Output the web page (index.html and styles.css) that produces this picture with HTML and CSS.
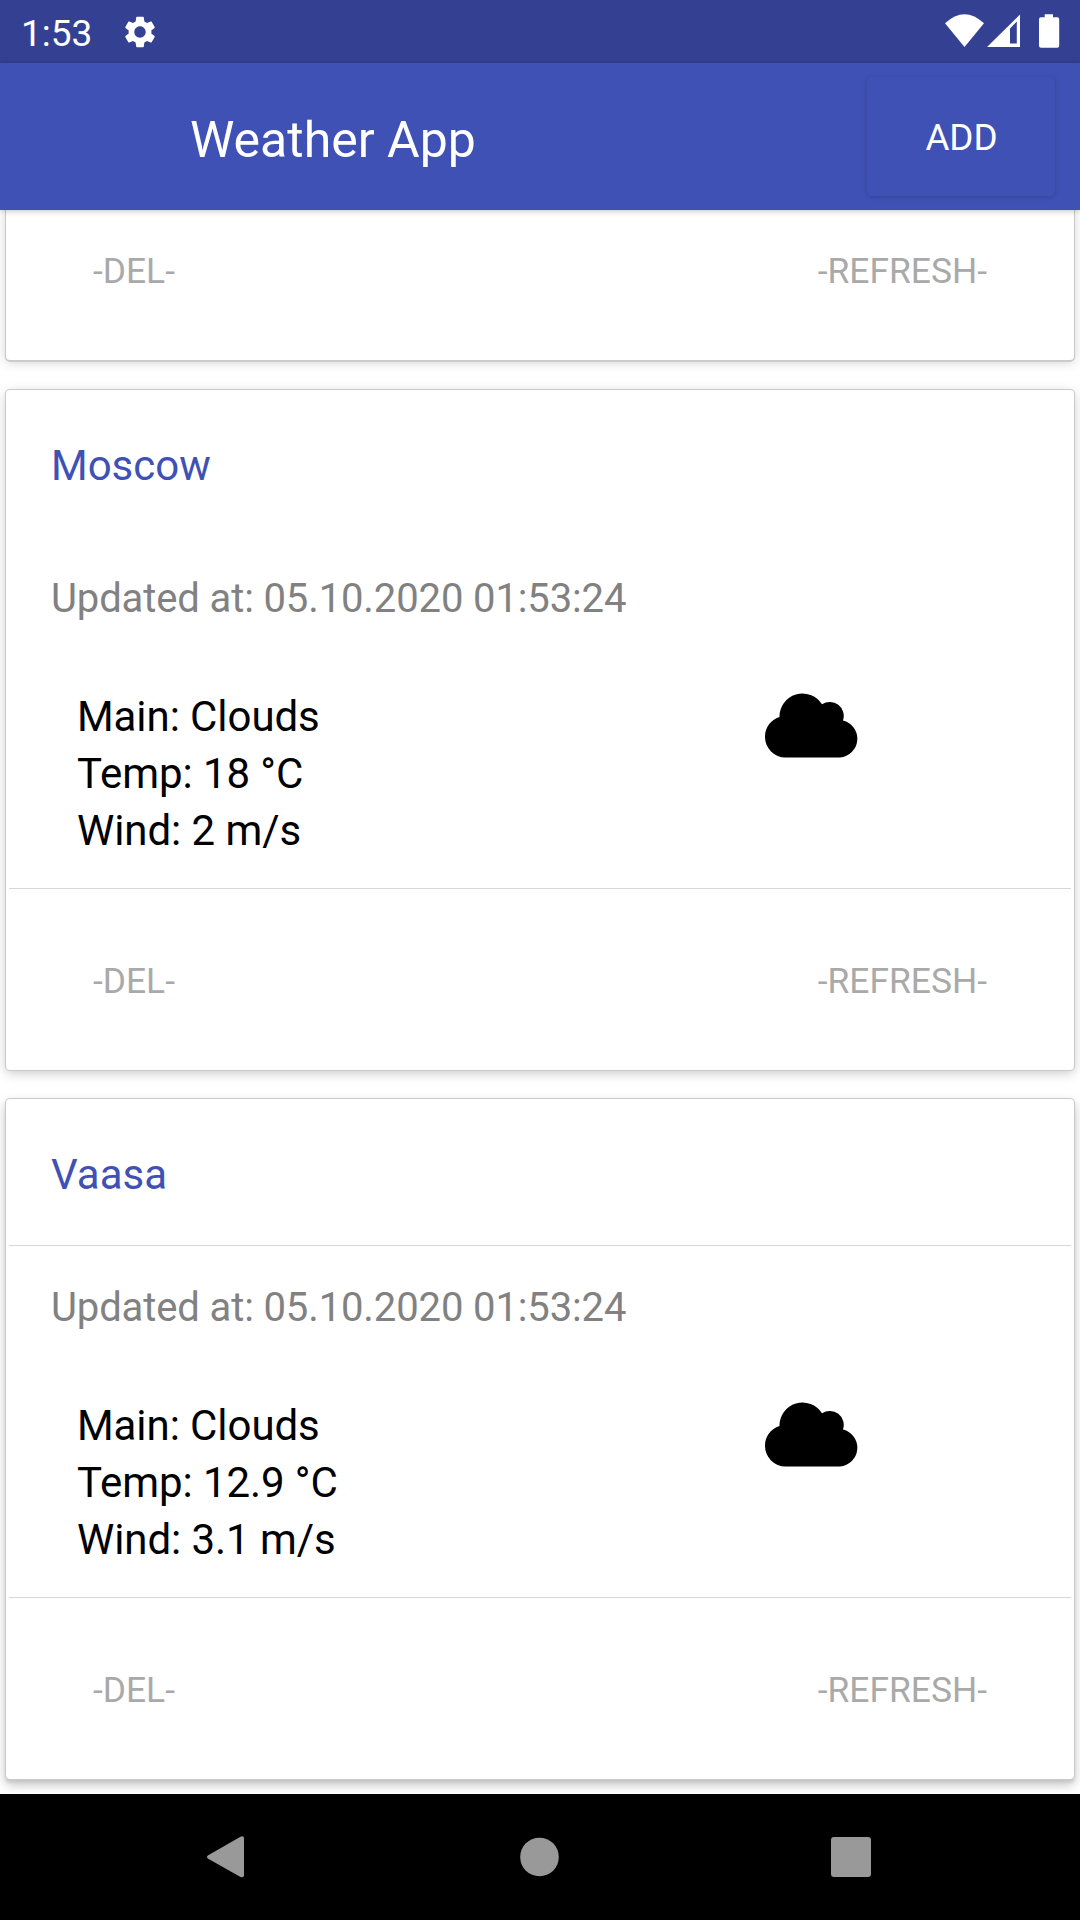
FILE: index.html
```html
<!DOCTYPE html>
<html lang="en">
<head>
<meta charset="utf-8">
<title>Weather App</title>
<link rel="stylesheet" href="styles.css">
</head>
<body>
<div class="statusbar">
  <span class="clock">1:53</span>
  <svg class="gear" width="38" height="38" viewBox="0 0 24 24"><path fill="#fff" d="M19.14 12.94c.04-.3.06-.61.06-.94 0-.32-.02-.64-.07-.94l2.03-1.58c.18-.14.23-.41.12-.61l-1.92-3.32c-.12-.22-.37-.29-.59-.22l-2.39.96c-.5-.38-1.03-.7-1.62-.94l-.36-2.54c-.04-.24-.24-.41-.48-.41h-3.84c-.24 0-.43.17-.47.41l-.36 2.54c-.59.24-1.13.57-1.62.94l-2.39-.96c-.22-.08-.47 0-.59.22L2.74 8.87c-.12.21-.08.47.12.61l2.03 1.58c-.05.3-.09.63-.09.94s.02.64.07.94l-2.03 1.58c-.18.14-.23.41-.12.61l1.92 3.32c.12.22.37.29.59.22l2.39-.96c.5.38 1.03.7 1.62.94l.36 2.54c.05.24.24.41.48.41h3.84c.24 0 .44-.17.47-.41l.36-2.54c.59-.24 1.13-.56 1.62-.94l2.39.96c.22.08.47 0 .59-.22l1.92-3.32c.12-.22.07-.47-.12-.61l-2.01-1.58zM12 15.6c-1.98 0-3.6-1.62-3.6-3.6s1.62-3.6 3.6-3.6 3.6 1.62 3.6 3.6-1.62 3.6-3.6 3.6z"/></svg>
  <svg class="signals" width="120" height="63" viewBox="0 0 120 63">
    <path fill="#fff" d="M5 23.200Q24.500 5.200 44 23.200L24.500 47Z"/>
    <path fill="#fff" fill-rule="evenodd" d="M47 47L80 14.500V47ZM70 28.500V43.500H76.800V21.500Z"/>
    <path fill="#fff" d="M104.700 14.300h8.300v3h4.200q2 0 2 2v26.500q0 2-2 2h-16.200q-2 0-2-2v-26.500q0-2 2-2h3.700z"/>
  </svg>
</div>
<header class="appbar">
  <h1 class="title">Weather App</h1>
  <button class="add">ADD</button>
</header>
<main class="list">
  <article class="card card-first">
    <div class="actions"><span>-DEL-</span><span>-REFRESH-</span></div>
  </article>
  <article class="card">
    <h2 class="city">Moscow</h2>
    <div class="body body-plain">
      <p class="updated">Updated at: 05.10.2020 01:53:24</p>
      <div class="weather">
        <div class="facts"><p>Main: Clouds</p><p>Temp: 18 °C</p><p>Wind: 2 m/s</p></div>
        <svg class="cloud" width="94" height="66" viewBox="0 0 94 66"><path d="M20.500 65.500A20.500 20.500 0 0 1 0 45A20.500 20.500 0 0 1 14.500 25A23 23 0 0 1 57 12.300A14 14 0 0 1 78 28.500A18.800 18.800 0 0 1 75 65.500Z"/></svg>
      </div>
    </div>
    <div class="actions"><span>-DEL-</span><span>-REFRESH-</span></div>
  </article>
  <article class="card card-last">
    <h2 class="city">Vaasa</h2>
    <div class="body">
      <p class="updated">Updated at: 05.10.2020 01:53:24</p>
      <div class="weather">
        <div class="facts"><p>Main: Clouds</p><p>Temp: 12.9 °C</p><p>Wind: 3.1 m/s</p></div>
        <svg class="cloud" width="94" height="66" viewBox="0 0 94 66"><path d="M20.500 65.500A20.500 20.500 0 0 1 0 45A20.500 20.500 0 0 1 14.500 25A23 23 0 0 1 57 12.300A14 14 0 0 1 78 28.500A18.800 18.800 0 0 1 75 65.500Z"/></svg>
      </div>
    </div>
    <div class="actions"><span>-DEL-</span><span>-REFRESH-</span></div>
  </article>
</main>
<nav class="navbar">
  <svg width="40" height="44" viewBox="0 0 40 44"><path fill="#999" d="M2.200 20.300L34.500 1.700Q37.800 .3 38 3.300V40.300Q37.800 43.300 34.500 41.900L2.200 23.800Q-.2 22 2.200 20.300Z"/></svg>
  <svg width="40" height="44" viewBox="0 0 40 44"><circle cx="20.500" cy="22" r="19.300" fill="#999"/></svg>
  <svg width="40" height="44" viewBox="0 0 40 44"><rect x="0" y="2" width="40" height="40" rx="3" fill="#999"/></svg>
</nav>
</body>
</html>
```

FILE: styles.css
```css
* { box-sizing: border-box; margin: 0; padding: 0; }
body {
  width: 1080px;
  height: 1920px;
  display: flex;
  flex-direction: column;
  overflow: hidden;
  background: #fff;
  font-family: Roboto, sans-serif;
  font-weight: 400;
}
h1, h2 { font-weight: 400; }
svg { display: block; flex: none; }

.statusbar {
  height: 63px;
  flex: none;
  display: flex;
  align-items: center;
  padding-left: 21px;
  background: #344193;
  color: #fff;
}
.clock { width: 100px; font-size: 37px; line-height: 63px; padding-top: 3px; }
.signals { margin-left: auto; margin-right: 20px; }

.appbar {
  height: 147px;
  flex: none;
  display: flex;
  align-items: center;
  justify-content: space-between;
  padding: 0 25px 0 190px;
  background: #3f51b5;
  color: #fff;
  position: relative;
  z-index: 1;
  box-shadow: 0 1px 6px rgba(0, 0, 0, .25);
}
.title { font-size: 50px; line-height: 60px; padding-top: 6px; }
.add {
  width: 188px;
  height: 119px;
  padding: 3px 0 0 1px;
  border: 0;
  border-radius: 5px;
  background: #3f51b5;
  box-shadow: 0 1px 5px rgba(0, 0, 0, .18);
  color: #fff;
  font: 36.750px/44px Roboto, sans-serif;
}

.list {
  height: 1584px;
  flex: none;
  overflow: hidden;
  padding: 0 6px;
  display: flex;
  flex-direction: column;
  gap: 29px;
}
.card {
  height: 680px;
  flex: none;
  display: flex;
  flex-direction: column;
  padding: 0 3px;
  border-radius: 4px;
  background: #fff;
  box-shadow: 0 0 0 1px #cacaca, 0 3px 12px rgba(0, 0, 0, .22);
}
.card-first {
  height: 150px;
  margin-bottom: 1px;
  border-radius: 0 0 4px 4px;
  box-shadow: 0 0 0 1px #cacaca, 0 1px 0 1px #ccc, 0 2px 12px rgba(0, 0, 0, .2);
}
.card-last { box-shadow: 0 0 0 1px #cacaca, 0 3px 3px #c8c8c8, 0 5px 12px rgba(0, 0, 0, .27); }
.city {
  height: 146px;
  padding: 48px 42px 0;
  color: #3f51b5;
  font-size: 42px;
  line-height: 56px;
}
.body { height: 353px; border-top: 1px solid #d7d7d7; border-bottom: 1px solid #d7d7d7; }
.body-plain { border-top-color: transparent; }
.updated {
  padding: 35px 42px 0;
  color: #818181;
  font-size: 40px;
  line-height: 54px;
  letter-spacing: -.12px;
}
.weather {
  display: flex;
  justify-content: space-between;
  padding: 62px 212px 0 68px;
  color: #000;
}
.facts { font-size: 42px; line-height: 57px; letter-spacing: -.07px; }
.cloud { margin-top: 4px; }
.actions {
  display: flex;
  justify-content: space-between;
  padding: 69px 84px 0;
  color: #a9a9a9;
  font-size: 35.400px;
  line-height: 46px;
}
.card-first .actions { padding-top: 38px; }

.navbar {
  height: 126px;
  flex: none;
  display: flex;
  align-items: center;
  justify-content: space-between;
  padding: 0 209px 0 206px;
  background: #000;
}
```
